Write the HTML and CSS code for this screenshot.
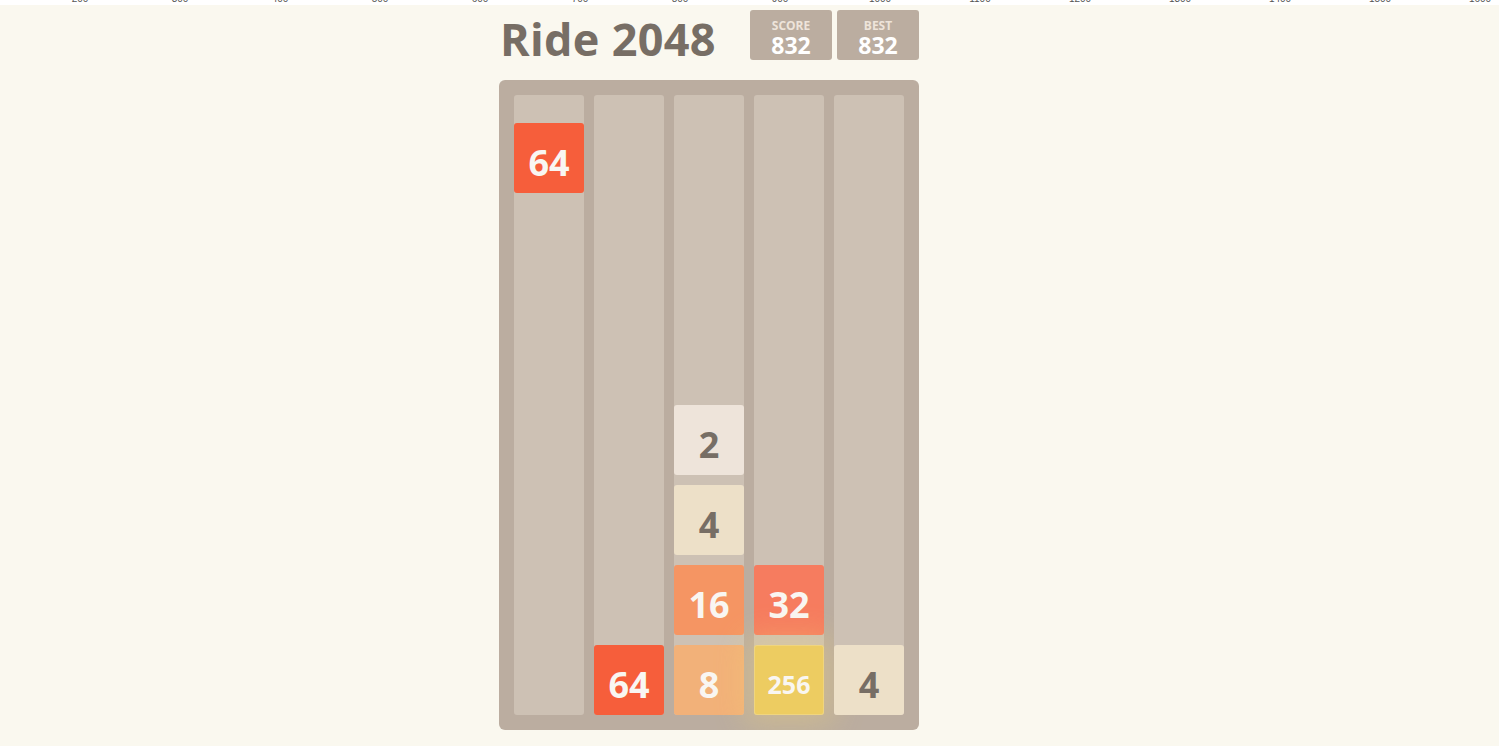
FILE: index.html
```html
<!DOCTYPE html>
<html lang="en">
<head>
    <meta charset="UTF-8">
    <meta name="viewport" content="width=device-width, initial-scale=1.0">
    <title>Ride 2048</title>
    <link rel="stylesheet" href="styles.css">
</head>
<body>
  <div class="ruler">
    <span>200</span><span>300</span><span>400</span><span>500</span><span>600</span>
    <span>700</span><span>800</span><span>900</span><span>1000</span><span>1100</span>
    <span>1200</span><span>1300</span><span>1400</span><span>1500</span><span>1600</span>
  </div>

  <div class="game">
    <div class="heading">
      <h1 class="title">Ride 2048</h1>
      <div class="scores">
        <div class="score-box"><span class="label">SCORE</span><span class="value">832</span></div>
        <div class="score-box"><span class="label">BEST</span><span class="value">832</span></div>
      </div>
    </div>

    <div class="board">
      <!-- lane 1: a tile still falling -->
      <div class="lane">
        <div class="tile tile-64 falling">64</div>
      </div>
      <div class="lane">
        <div class="tile tile-64">64</div>
      </div>
      <div class="lane">
        <div class="tile tile-2">2</div>
        <div class="tile tile-4">4</div>
        <div class="tile tile-16">16</div>
        <div class="tile tile-8">8</div>
      </div>
      <div class="lane">
        <div class="tile tile-32">32</div>
        <div class="tile tile-256">256</div>
      </div>
      <div class="lane">
        <div class="tile tile-4">4</div>
      </div>
    </div>
  </div>
</body>
</html>
```

FILE: styles.css
```css
body {
    margin: 0;
    background-color: #faf8ef;
    font-family: "Open Sans", "Noto Sans", Arial, sans-serif;
    color: #776e65;
}

/* coordinate strip along the top edge */
.ruler {
    height: 5px;
    background: #fff;
    overflow: hidden;
    display: flex;
    padding-left: 30px;
}
.ruler span {
    flex: 0 0 100px;
    text-align: center;
    font-family: "Liberation Sans", Arial, sans-serif;
    font-size: 10px;
    line-height: 10px;
    margin-top: -6px;
    color: #555;
}

.game {
    width: 420px;
    margin-left: 499px;
}

.heading {
    display: flex;
    justify-content: space-between;
    align-items: flex-start;
    padding-top: 5px;
    height: 55px;
}
.title {
    margin: 4px 0 0 1px;
    font-size: 45px;
    line-height: 50px;
    font-weight: 700;
    letter-spacing: 0.3px;
    color: #776e65;
}
.scores {
    display: flex;
    gap: 5px;
}
.score-box {
    width: 82px;
    height: 50px;
    background-color: #bbada0;
    border-radius: 3px;
    display: flex;
    flex-direction: column;
    align-items: center;
    padding-top: 10px;
    box-sizing: border-box;
}
.score-box .label {
    font-size: 12px;
    line-height: 12px;
    font-weight: 700;
    color: #eee4da;
}
.score-box .value {
    margin-top: 1px;
    font-size: 23px;
    line-height: 24px;
    font-weight: 700;
    color: #fff;
}

.board {
    margin-top: 15px;
    height: 650px;
    padding: 15px;
    box-sizing: border-box;
    background-color: #bbada0;
    border-radius: 6px;
    display: flex;
    gap: 10px;
}
.lane {
    width: 70px;
    background-color: #cdc1b4;
    border-radius: 3px;
    display: flex;
    flex-direction: column;
    justify-content: flex-end;
    gap: 10px;
}
.lane .falling {
    margin-top: 28px;
    margin-bottom: auto;
}

.tile {
    width: 70px;
    height: 70px;
    border-radius: 3px;
    display: flex;
    align-items: center;
    justify-content: center;
    padding-top: 8px;
    box-sizing: border-box;
    font-size: 36px;
    font-weight: 700;
    color: #f9f6f2;
}
.tile-2 { background: #eee4da; color: #776e65; }
.tile-4 { background: #ede0c8; color: #776e65; }
.tile-8 { background: #f2b179; }
.tile-16 { background: #f59563; }
.tile-32 { background: #f67c5f; }
.tile-64 { background: #f65e3b; }
.tile-256 {
    background: #edcc61;
    font-size: 25px;
    box-shadow: 0 0 30px 10px rgba(243, 215, 116, 0.32), inset 0 0 0 1px rgba(255, 255, 255, 0.19);
}
```
